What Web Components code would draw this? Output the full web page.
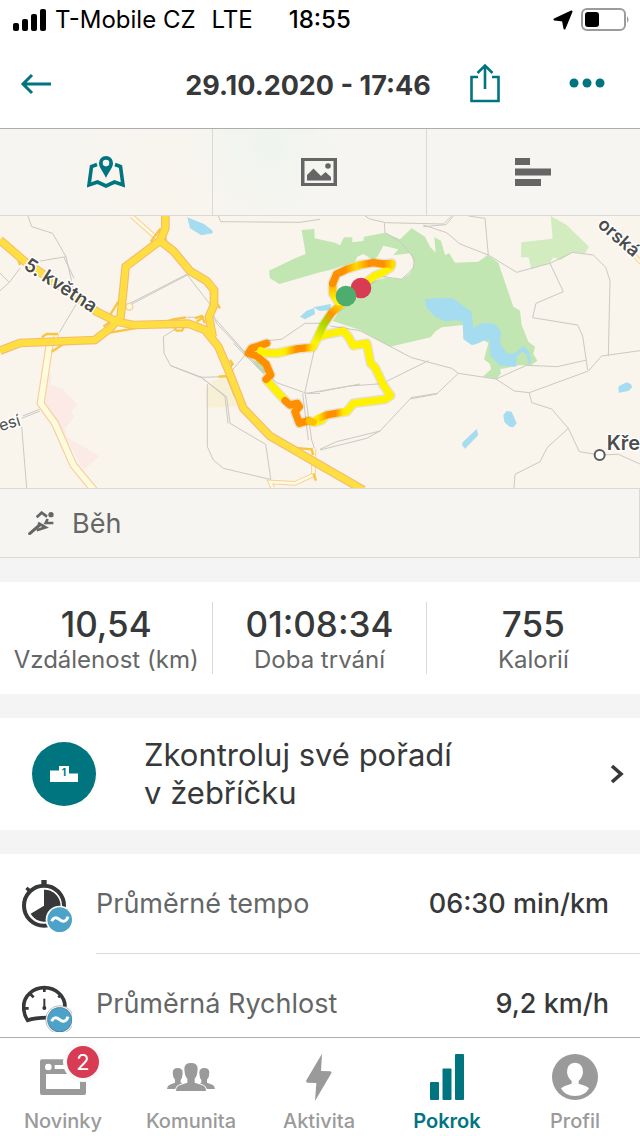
<!DOCTYPE html>
<html lang="cs">
<head>
<meta charset="utf-8">
<meta name="viewport" content="width=device-width, initial-scale=1">
<title>29.10.2020 - 17:46</title>
<style>
  html, body {
    margin: 0;
    height: 100%;
  }

  body {
    --teal: #00757f;
    --ink: #373839;
    --muted: #656666;
    --idle: #9a9a9a;
    --line: #d9d9d8;
    --gap: #f4f4f4;
    --paper: #f7f5f1;
    font-family: Inter, "Liberation Sans", sans-serif;
    color: var(--ink);
    background: #fff;
  }
</style>
</head>
<body>

<activity-app>
  <status-bar slot="top" carrier="T-Mobile CZ" network="LTE" time="18:55"></status-bar>
  <page-header slot="top">29.10.2020 - 17:46</page-header>

  <view-tabs></view-tabs>
  <route-map></route-map>
  <sport-row>Běh</sport-row>

  <stat-group>
    <stat-item value="10,54">Vzdálenost (km)</stat-item>
    <stat-item value="01:08:34">Doba trvání</stat-item>
    <stat-item value="755">Kalorií</stat-item>
  </stat-group>

  <ranking-link href="#zebricek">Zkontroluj své pořadí<br>v žebříčku</ranking-link>

  <metric-list>
    <metric-row icon="stopwatch" value="06:30 min/km">Průměrné tempo</metric-row>
    <metric-row icon="gauge" value="9,2 km/h">Průměrná Rychlost</metric-row>
  </metric-list>

  <tab-bar slot="bottom">
    <tab-item icon="news" href="#novinky" badge="2">Novinky</tab-item>
    <tab-item icon="people" href="#komunita">Komunita</tab-item>
    <tab-item icon="bolt" href="#aktivita">Aktivita</tab-item>
    <tab-item icon="bars" href="#pokrok" active>Pokrok</tab-item>
    <tab-item icon="profile" href="#profil">Profil</tab-item>
  </tab-bar>
</activity-app>

<script>
// ===== ICONS =====

const tilde = (y) => `
  <circle cx="179" cy="${y}" r="42" fill="#fff"/>
  <circle cx="179" cy="${y}" r="37" fill="#4ca2c8"/>
  <path d="M155 ${y + 5} C160 ${y - 8} 169 ${y - 8} 179 ${y} C188 ${y + 8} 199 ${y + 7} 204 ${y - 9}" fill="none" stroke="#fff" stroke-width="9"/>`;

const icons = {
  back: `<svg width="32" height="22" viewBox="0 0 32 22" fill="none" stroke="currentColor" stroke-width="3">
    <path d="M3 11H31M12 2L3 11L12 20"/></svg>`,

  share: `<svg width="32" height="40" viewBox="0 0 32 40" fill="none" stroke="currentColor" stroke-width="2.600">
    <path d="M9 14H2.500V38H29.500V14H23M16 26V3M8.500 10L16 2.500L23.500 10"/></svg>`,

  more: `<svg width="36" height="10" viewBox="0 0 36 10" fill="currentColor">
    <circle cx="5" cy="5" r="4.500"/><circle cx="18" cy="5" r="4.500"/><circle cx="31" cy="5" r="4.500"/></svg>`,

  map: `<svg width="38" height="32" viewBox="0 0 38 32">
    <path d="M10 8.500L4.500 10.500L2 29L10.500 26L19 30L27.500 26L36 29L33.500 10.500L28 8.500" fill="none" stroke="currentColor" stroke-width="3.600"/>
    <path fill="currentColor" fill-rule="evenodd" d="M19 0A7 7 0 0 1 26 7C26 12 22 15 19 22C16 15 12 12 12 7A7 7 0 0 1 19 0ZM19 3.800A3.300 3.300 0 1 0 19 10.400A3.300 3.300 0 1 0 19 3.800Z"/></svg>`,

  photo: `<svg width="36" height="28" viewBox="0 0 36 28" fill="currentColor">
    <path fill-rule="evenodd" d="M0 0H36V28H0ZM3.500 3V25H32.500V3Z"/>
    <circle cx="27" cy="8" r="2.800"/>
    <path d="M6 17L12.500 10.500L20 18L24.500 14L30 19V22.500H6Z"/></svg>`,

  chart: `<svg width="36" height="28" viewBox="0 0 36 28" fill="currentColor">
    <path d="M0 0H15V7H0ZM0 10.500H36V17.500H0ZM0 21H26V28H0Z"/></svg>`,

  run: `<svg width="26" height="24" viewBox="84 88 76 72" fill="none" stroke="currentColor">
    <circle cx="152" cy="99" r="8" fill="currentColor" stroke="none"/>
    <path d="M109 107L124 93L140 105M142 112L136 124H159M113 124L136 137L109 146" stroke-width="8"/>
    <path d="M88 156L118 130" stroke-width="9" stroke-linecap="round"/></svg>`,

  podium: `<svg width="28" height="16" viewBox="0 0 28 16">
    <path fill="#fff" d="M0 4.500H9V0H19V7.500H28V16H0Z"/>
    <text x="14" y="9.500" text-anchor="middle" font-size="10" font-weight="700" fill="#00757f">1</text></svg>`,

  chevron: `<svg width="14" height="20" viewBox="0 0 14 20" fill="none" stroke="currentColor" stroke-width="3.600">
    <path d="M2 2L11 10L2 18"/></svg>`,

  stopwatch: `<svg width="50" height="56" viewBox="66 78 150 168" fill="#373839">
    <path d="M124 90H140V106H124ZM76 117L83 110L95 121L87 129Z"/>
    <circle cx="132" cy="167" r="60" fill="none" stroke="#373839" stroke-width="12"/>
    <path d="M132 119A48 48 0 1 1 92 191L132 167Z"/>${tilde(209)}</svg>`,

  gauge: `<svg width="50" height="56" viewBox="66 378 150 168" fill="none" stroke="#373839">
    <path d="M142 503Q104 503 83 511Q71 494 71 470A62 57 0 0 1 195 470" stroke-width="11"/>
    <path d="M133 414V426M91 432L101 442M175 442L185 432M74 475H86M180 475H194" stroke-width="8"/>
    <path d="M133 446V478" stroke-width="6"/>
    <circle cx="133" cy="474" r="6" fill="#373839" stroke="none"/>${tilde(509)}</svg>`,

  news: `<svg width="46" height="36" viewBox="0 0 138 108" fill="currentColor">
    <path fill-rule="evenodd" d="M6 1H132Q138 1 138 7V102Q138 108 132 108H6Q0 108 0 102V7Q0 1 6 1ZM18 45V90H120V45ZM44 18V30H120V18Z"/>
    <circle cx="25" cy="24" r="10" fill="#fff"/></svg>`,

  people: `<svg width="48" height="30" viewBox="0 0 144 90" fill="currentColor">
    <path d="M17 32Q17 18 32 18Q47 18 47 32Q46 50 41 53V62L47 64Q30 72 26 81H0Q1 71 8 68L24 62V53Q17 46 17 32Z"/>
    <path d="M127 32Q127 18 112 18Q97 18 97 32Q98 50 103 53V62L97 64Q114 72 118 81H144Q143 71 136 68L120 62V53Q127 46 127 32Z"/>
    <path stroke="#fff" stroke-width="6" paint-order="stroke" d="M52 20Q52 3 72 3Q92 3 92 20Q91 43 83 50V62L106 70Q117 74 117 87H27Q27 74 38 70L61 62V50Q53 43 52 20Z"/></svg>`,

  bolt: `<svg width="26" height="48" viewBox="52 20 78 144" fill="currentColor">
    <path d="M100 22L53 102Q51 108 56 109L83 110L79 164L128 81Q130 76 125 75L97 74Z"/></svg>`,

  bars: `<svg width="34" height="46" viewBox="0 0 34 46" fill="currentColor">
    <rect y="28" width="9" height="18" rx="1"/><rect x="12.500" y="14.500" width="9" height="31.500" rx="1"/><rect x="25" width="9" height="46" rx="1"/></svg>`,

  profile: `<svg width="46" height="46" viewBox="696 69 138 138">
    <circle cx="765" cy="138" r="69" fill="currentColor"/>
    <path fill="#fff" d="M765 95Q790 97 789 124Q787 141 776 150V158Q802 165 807 172Q795 195 765 195Q735 195 723 172Q730 165 755 158V150Q743 141 741 124Q740 97 765 95Z"/></svg>`
};

// ===== BASE ELEMENT =====

class BaseElement extends HTMLElement {
  constructor() {
    super();
    this.attachShadow({ mode: 'open' });
  }

  connectedCallback() {
    const template = document.createElement('template');
    template.innerHTML = `
      <style>
        * { box-sizing: border-box; }
        :host { display: block; box-sizing: border-box; }
        svg { display: block; flex: none; }
        button {
          margin: 0;
          padding: 0;
          border: 0;
          background: none;
          color: inherit;
          font: inherit;
          cursor: pointer;
        }
        a { color: inherit; text-decoration: none; }
        ${this.styles()}
      </style>
      ${this.markup()}
    `;
    this.shadowRoot.replaceChildren(template.content.cloneNode(true));
  }

  attr(name) {
    return this.getAttribute(name) || '';
  }

  styles() { return ''; }
  markup() { return '<slot></slot>'; }
}

// ===== APP SHELL =====

class ActivityApp extends BaseElement {
  styles() {
    return `
      :host {
        display: flex;
        flex-direction: column;
        height: 100vh;
      }
      main {
        flex: 1;
        min-height: 0;
        overflow-y: auto;
        scrollbar-width: none;
        background: var(--gap);
      }
    `;
  }

  markup() {
    return `
      <slot name="top"></slot>
      <main><slot></slot></main>
      <slot name="bottom"></slot>
    `;
  }
}

class StatusBar extends BaseElement {
  styles() {
    return `
      :host {
        display: flex;
        align-items: center;
        height: 40px;
        padding: 0 11px 0 13px;
        font-size: 24px;
        line-height: 40px;
        color: #000;
      }
      .network { margin-left: 16px; }
      .carrier { margin-left: 8px; }
      time { margin-left: 36px; font-weight: 500; }
      .right {
        display: flex;
        align-items: center;
        gap: 8px;
        margin-left: auto;
      }
    `;
  }

  markup() {
    return `
      <svg width="34" height="22" viewBox="0 0 34 22">
        <rect y="14" width="6" height="8" rx="2"/>
        <rect x="9" y="10" width="6" height="12" rx="2"/>
        <rect x="18" y="5" width="6" height="17" rx="2"/>
        <rect x="27" width="6" height="22" rx="2"/>
      </svg>
      <span class="carrier">${this.attr('carrier')}</span>
      <span class="network">${this.attr('network')}</span>
      <time>${this.attr('time')}</time>
      <div class="right">
        <svg width="20" height="20" viewBox="0 0 20 20"><path d="M18.500 1.500L1.500 9.500L10 10.500L11.500 18.500Z" stroke="#000" stroke-width="2" stroke-linejoin="round"/></svg>
        <svg width="48" height="24" viewBox="0 0 48 24">
          <rect x="1" y="1" width="43" height="21" rx="5" fill="none" stroke="#9b9b9b" stroke-width="2"/>
          <rect x="4" y="4" width="14" height="15" rx="3"/>
          <path d="M46 8Q49 11.500 46 15Z" fill="#9b9b9b"/>
        </svg>
      </div>
    `;
  }
}

class PageHeader extends BaseElement {
  styles() {
    return `
      header {
        display: grid;
        grid-template-columns: 148px 1fr 172px;
        align-items: center;
        height: 89px;
        border-bottom: 1px solid #adadad;
        color: var(--teal);
      }
      .back { padding: 12px 20px; justify-self: start; }
      h1 {
        margin: 0;
        padding-top: 4px;
        font-size: 27px;
        line-height: 36px;
        font-weight: 700;
        text-align: center;
        white-space: nowrap;
        color: var(--ink);
      }
      .actions {
        display: flex;
        justify-content: space-between;
        align-items: center;
        padding: 0 35px 2px 1px;
      }
    `;
  }

  markup() {
    return `
      <header>
        <button class="back" type="button" aria-label="Zpět">${icons.back}</button>
        <h1><slot></slot></h1>
        <div class="actions">
          <button type="button" aria-label="Sdílet">${icons.share}</button>
          <button type="button" aria-label="Více">${icons.more}</button>
        </div>
      </header>
    `;
  }
}

// ===== MAP SECTION =====

class ViewTabs extends BaseElement {
  styles() {
    return `
      nav {
        display: grid;
        grid-template-columns: repeat(3, 1fr);
        height: 87px;
        border-bottom: 1px solid var(--line);
        color: #646564;
        background:
          radial-gradient(circle at 42% 20%, #eff4ef, transparent 80px),
          radial-gradient(circle at 26% 80%, #f9f5ed, transparent 110px),
          var(--paper);
      }
      button { display: grid; place-items: center; }
      button:not(:last-child) { border-right: 1px solid var(--line); }
      .active { color: var(--teal); }
    `;
  }

  markup() {
    return `
      <nav aria-label="Zobrazení">
        <button class="active" type="button" aria-label="Mapa">${icons.map}</button>
        <button type="button" aria-label="Fotky">${icons.photo}</button>
        <button type="button" aria-label="Grafy">${icons.chart}</button>
      </nav>
    `;
  }
}

class RouteMap extends BaseElement {
  styles() {
    return `
      svg {
        width: 100%;
        height: 272px;
        background: #f9f4ec;
      }
      .paths { fill: none; stroke: #cbc9c3; stroke-width: 3; }
      .minor-edge { fill: none; stroke: #f8cfa0; stroke-width: 24; }
      .minor { fill: none; stroke: #fffbdc; stroke-width: 17; }
      .narrow .minor-edge { stroke-width: 14; }
      .narrow .minor { stroke-width: 8; }
      .major-edge { fill: none; stroke: #f5bc70; stroke-width: 26; }
      .major { fill: none; stroke: #ffdf40; stroke-width: 19; }
      .ramps { fill: none; stroke: #f9c53c; stroke-width: 7; }
      .water { fill: #a5dcf0; }
      .track { fill: none; stroke-width: 22; stroke-linecap: round; stroke-linejoin: round; }
      .track .shadow { stroke-width: 30; }
      text {
        font-weight: 600;
        fill: #4c4c4c;
        stroke: #fff;
        stroke-width: 9;
        stroke-linejoin: round;
        paint-order: stroke;
      }
      .area { font-weight: 400; }
    `;
  }

  markup() {
    const track = `M1105 212L1125 197L1150 187L1172 172L1175 160L1150 162L1120 158L1080 165L1040 178L1010 192L998 220L998 250L1015 275
      M1025 282L995 308L970 345L952 385L938 412L880 418L830 430L795 428L782 422
      M955 380L985 372L1030 363L1045 380L1060 407L1100 400L1112 460L1125 472L1150 525L1172 557L1155 568L1060 580L1040 605L980 615L965 630L945 637L925 632L898 640L885 605L898 590L892 580L870 585L840 555L798 508L812 495L798 462L770 438L745 430L755 415L800 400`;

    const roads = `M0 90L75 155L290 305L350 335L400 345L565 341L615 360L655 410L685 480L730 595L810 678L960 765L1090 840
      M0 422L60 399L285 390L330 355L362 320L377 170L480 92L496 55V10
      M480 92L520 123L570 183L620 213L642 240V285L627 320L638 380`;

    return `
      <svg viewBox="0 18 1920 816" preserveAspectRatio="xMidYMid slice" role="img" aria-label="Mapa trasy">
        <defs>
          <linearGradient id="warm" x1="0" x2="1"><stop stop-color="#ffed00"/><stop offset=".4" stop-color="#ff8e00"/><stop offset=".7" stop-color="#ff8e00"/><stop offset="1" stop-color="#ffed00"/></linearGradient>
          <linearGradient id="slope" gradientUnits="userSpaceOnUse" x1="1025" y1="282" x2="945" y2="395"><stop stop-color="#ffdc00"/><stop offset=".3" stop-color="#ff9300"/><stop offset=".55" stop-color="#a8d600"/><stop offset="1" stop-color="#fff200"/></linearGradient>
          <linearGradient id="loop" gradientUnits="userSpaceOnUse" x1="998" y1="0" x2="1178" y2="0"><stop stop-color="#ff8e00"/><stop offset=".2" stop-color="#ff8e00"/><stop offset=".4" stop-color="#ffdc00"/><stop offset=".6" stop-color="#ff8e00"/><stop offset=".85" stop-color="#ff8e00"/><stop offset="1" stop-color="#ffdc00"/></linearGradient>
          <linearGradient id="rise" gradientUnits="userSpaceOnUse" x1="0" y1="200" x2="0" y2="270"><stop stop-color="#ff8e00"/><stop offset="1" stop-color="#fff200"/></linearGradient>
        </defs>

        <!-- land -->
        <path fill="#fbeae6" d="M145 485L155 500L150 525L188 538L232 585L212 603L222 620L195 655L200 682L298 738L250 780L180 650L135 590Z"/>
        <path fill="#f8f0d6" d="M640 513L672 500L712 590L618 593L616 540Z"/>
        <g transform="translate(960 0)">
          <path fill="#c2e6b2" d="M-55 60L-17 57L-16 85L45 98L60 106L72 82L97 82L97 97L130 93L132 80L195 68L240 88L275 55L315 80L330 110L347 128L343 82L363 92L375 135L388 130L405 158L475 155L503 135L535 158L580 290L600 302L605 345L625 395L645 410L640 432L652 452L630 468L600 465L540 478L543 490L530 507L488 500L513 478L510 462L492 448L505 400L430 345L365 352L345 365L332 382L210 410L120 360L38 333L60 300L75 290L150 215L200 203L245 208L270 190L283 160L270 130L220 136L235 118L190 107L172 140L160 150L130 132L112 140L105 155L30 180L0 187L-122 222L-150 205L-153 182L-75 145L-43 132Z"/>
          <path fill="#d2ebbf" d="M692 18L740 45L807 110L795 130L758 127L722 150L700 142L690 158L634 178L626 142L603 142L604 97L698 86Z"/>
          <path fill="#c2e6b2" d="M-205 450L-185 455L-160 480L-170 492Z"/>
          <path class="water" d="M315 268Q350 262 400 265L425 285L455 305L460 355Q480 338 495 338L525 342L543 362L540 400L560 430L580 432L612 408L628 425L634 460L627 462L618 432L606 425L590 440L588 470L540 467L512 438L508 390L490 392Q465 405 455 405L430 388L428 335L400 330L380 335L345 320L318 290Z"/>
          <path class="water" d="M550 615L560 603L575 605L590 640L580 652L568 650L553 635ZM428 697L470 657L475 675L435 716L426 705ZM895 535L897 528L920 517L932 522L937 532L925 543L897 548Z"/>
        </g>
        <path class="water" d="M562 22L612 42L638 62L638 70L604 76L570 55ZM900 320L920 302L942 294L945 312L915 328ZM940 292L992 282L992 300L960 303Z"/>

        <!-- footpaths -->
        <g class="paths">
          <path d="M84 18L95 50L158 70L198 140L230 280L178 368M110 155L198 140M192 142L222 205M0 190L28 217L60 175M28 217L0 242M655 18L662 35L900 37L960 28M390 285L562 195L632 285M390 280L562 192"/>
          <path d="M560 322H590M530 355L490 380L492 430L512 467L600 502L680 500L740 430M800 392L845 388L915 340L960 340M630 290L650 340L740 435L830 518L920 550L960 550M512 467L600 500L680 560L690 640L797 703L810 790L815 834M600 498L675 560L684 640M622 522L622 710L640 750L670 775L810 808M640 320L800 500M700 400L790 490"/>
          <path d="M945 410L915 545L935 690L945 720M908 550L925 690M65 650L80 834M65 625L120 603M68 618L118 598"/>
          <g transform="translate(960 0)">
            <path d="M-40 550L90 528L200 520M0 545L120 522M0 718L50 695L180 663L270 567L350 552L415 490M0 720L140 685L182 662M272 563L352 550M200 514L325 452M30 348L120 362L275 443L395 475L415 490L528 507L583 543L628 548L805 483L845 438L960 422M528 507L620 466L712 470L800 450"/>
            <path d="M135 18L150 27L193 37L195 68L240 95L283 145L280 175L245 208L190 200M195 38L370 42L395 18M310 45L380 68L420 102L505 135L590 187L690 160L758 127L820 135L857 172L870 212L865 438M310 50L378 44L400 18M445 18L495 25L505 135M690 160L730 245L648 280L638 323L773 345L788 378L803 480M628 548L635 578L695 597L745 655L778 725L840 735L895 733L960 762M745 655L682 712L660 755L585 793L582 834"/>
          </g>
        </g>

        <!-- roads -->
        <path class="minor-edge" d="M150 395L122 580L165 640L220 765L290 850"/>
        <path class="minor" d="M150 395L122 580L165 640L220 765L290 850"/>
        <g class="narrow">
          <path class="minor-edge" d="M395 18L470 85M942 715L940 795L885 820L810 816L818 834M160 400L170 372M1860 90L1930 165"/>
          <path class="minor" d="M395 18L470 85M942 715L940 795L885 820L810 816L818 834M160 400L170 372M1860 90L1930 165"/>
        </g>
        <circle cx="388" cy="290" r="10" fill="#fffbdc" stroke="#f8cfa0" stroke-width="4"/>
        <path class="ramps" d="M482 55L452 95M492 60L500 105M355 275L330 315M345 325L310 350M125 382L140 372H175M155 425L190 402M60 165L55 150M500 335L520 328L558 322M522 355L530 362H546L552 350M585 325L605 318L615 340M590 335L612 320M660 295L648 275M690 450L698 462L690 470M655 500L680 498L705 560M870 712L935 718L940 735M940 790L948 812M330 368L420 352"/>
        <path class="major-edge" d="${roads}"/>
        <path class="major" d="${roads}"/>

        <!-- recorded track -->
        <g class="track">
          <path class="shadow" d="${track}" stroke="#8b8577" stroke-opacity=".18"/>
          <path d="${track}" stroke="#fff200"/>
          <path d="M1025 282L995 308L970 345L952 385" stroke="url(#slope)"/>
          <path d="M998 220L998 250L1015 275" stroke="url(#rise)"/>
          <path d="M1175 165L1175 160L1150 162L1120 158L1080 165L1040 178L1010 192L998 220" stroke="url(#loop)"/>
          <path d="M855 425L895 416L938 412" stroke="url(#warm)"/>
          <path d="M1030 606L980 615L952 626" stroke="url(#warm)"/>
          <path d="M925 632L898 640L885 605L898 590L892 580L870 585L855 572M798 508L812 495L798 462L770 438L745 430L755 415L800 400" stroke="#ff8e00"/>
          <path d="M940 636L928 633" stroke="#ffc000"/>
          <path d="M830 430L795 428L782 422" stroke="#fff200"/>
        </g>
        <circle cx="1083" cy="234" r="31" fill="#d83b54"/>
        <circle cx="1038" cy="258" r="31" fill="#4ead6e"/>

        <!-- place names -->
        <text transform="translate(68 174) rotate(33)" font-size="56">5. května</text>
        <text class="area" transform="translate(2 664) rotate(-17)" font-size="48">esí</text>
        <text transform="translate(1790 48) rotate(41)" font-size="54">orská</text>
        <text x="1820" y="720" font-size="60">Kře</text>
        <circle cx="1799" cy="735" r="15" fill="#fff" stroke="#5a5a5a" stroke-width="6"/>
      </svg>
    `;
  }
}

class SportRow extends BaseElement {
  styles() {
    return `
      :host {
        display: flex;
        align-items: center;
        gap: 18px;
        height: 70px;
        padding-left: 28px;
        border: 1px solid var(--line);
        border-left: 0;
        font-size: 27px;
        color: var(--muted);
        background: var(--paper);
      }
    `;
  }

  markup() {
    return `${icons.run}<span><slot></slot></span>`;
  }
}

// ===== STATS =====

class StatGroup extends BaseElement {
  styles() {
    return `
      :host {
        display: grid;
        grid-template-columns: repeat(3, 1fr);
        margin: 24px 0;
        padding: 20px 0;
        background: #fff;
      }
      ::slotted(stat-item:not(:last-child)) { border-right: 1px solid var(--line); }
    `;
  }
}

class StatItem extends BaseElement {
  styles() {
    return `
      :host { text-align: center; white-space: nowrap; }
      dl { margin: 0; display: flex; flex-direction: column-reverse; }
      dt { font-size: 24px; line-height: 28px; color: var(--muted); }
      dd { margin: 0; font-size: 35px; line-height: 44px; font-weight: 500; }
    `;
  }

  markup() {
    return `<dl><dt><slot></slot></dt><dd>${this.attr('value')}</dd></dl>`;
  }
}

class RankingLink extends BaseElement {
  styles() {
    return `
      a {
        display: flex;
        align-items: center;
        gap: 48px;
        padding: 18px 16px 18px 32px;
        background: #fff;
      }
      .disc {
        display: grid;
        place-items: center;
        flex: none;
        width: 64px;
        height: 64px;
        border-radius: 50%;
        background: var(--teal);
      }
      .label { flex: 1; font-size: 31px; line-height: 38px; }
    `;
  }

  markup() {
    return `
      <a href="${this.attr('href')}">
        <span class="disc">${icons.podium}</span>
        <span class="label"><slot></slot></span>
        ${icons.chevron}
      </a>
    `;
  }
}

class MetricList extends BaseElement {
  styles() {
    return `
      :host { margin-top: 24px; background: #fff; }
    `;
  }
}

class MetricRow extends BaseElement {
  styles() {
    return `
      :host {
        display: flex;
        align-items: center;
        gap: 24px;
        padding-left: 22px;
      }
      .body {
        display: flex;
        flex: 1;
        align-items: center;
        justify-content: space-between;
        height: 100px;
        padding-right: 31px;
        border-bottom: 1px solid var(--line);
        font-size: 27px;
      }
      .name { color: var(--muted); }
      .value { font-weight: 500; }
    `;
  }

  markup() {
    return `
      ${icons[this.attr('icon')]}
      <div class="body">
        <span class="name"><slot></slot></span>
        <span class="value">${this.attr('value')}</span>
      </div>
    `;
  }
}

// ===== BOTTOM NAVIGATION =====

class TabBar extends BaseElement {
  styles() {
    return `
      nav {
        display: grid;
        grid-template-columns: repeat(5, 1fr);
        padding: 15px 0 3px;
        border-top: 1px solid #adadad;
        background: #fff;
      }
    `;
  }

  markup() {
    return '<nav aria-label="Hlavní"><slot></slot></nav>';
  }
}

class TabItem extends BaseElement {
  styles() {
    return `
      a {
        display: flex;
        flex-direction: column;
        align-items: center;
        gap: 8px;
        padding-right: 2px;
        font-size: 20px;
        line-height: 24px;
        font-weight: 500;
        color: var(--idle);
      }
      :host([active]) a { color: var(--teal); font-weight: 600; }
      .icon {
        position: relative;
        display: grid;
        place-items: center;
        height: 48px;
      }
      .badge {
        position: absolute;
        left: 23px;
        top: -11px;
        width: 40px;
        height: 40px;
        border: 4px solid #fafafa;
        border-radius: 50%;
        background: #d83b54;
        color: #fff;
        font-size: 22px;
        line-height: 32px;
        font-weight: 400;
        text-align: center;
      }
    `;
  }

  markup() {
    const badge = this.attr('badge');
    return `
      <a href="${this.attr('href')}">
        <span class="icon">
          ${icons[this.attr('icon')]}
          ${badge ? `<span class="badge">${badge}</span>` : ''}
        </span>
        <span><slot></slot></span>
      </a>
    `;
  }
}

// Register everything
customElements.define('activity-app', ActivityApp);
customElements.define('status-bar', StatusBar);
customElements.define('page-header', PageHeader);
customElements.define('view-tabs', ViewTabs);
customElements.define('route-map', RouteMap);
customElements.define('sport-row', SportRow);
customElements.define('stat-group', StatGroup);
customElements.define('stat-item', StatItem);
customElements.define('ranking-link', RankingLink);
customElements.define('metric-list', MetricList);
customElements.define('metric-row', MetricRow);
customElements.define('tab-bar', TabBar);
customElements.define('tab-item', TabItem);
</script>
</body>
</html>
